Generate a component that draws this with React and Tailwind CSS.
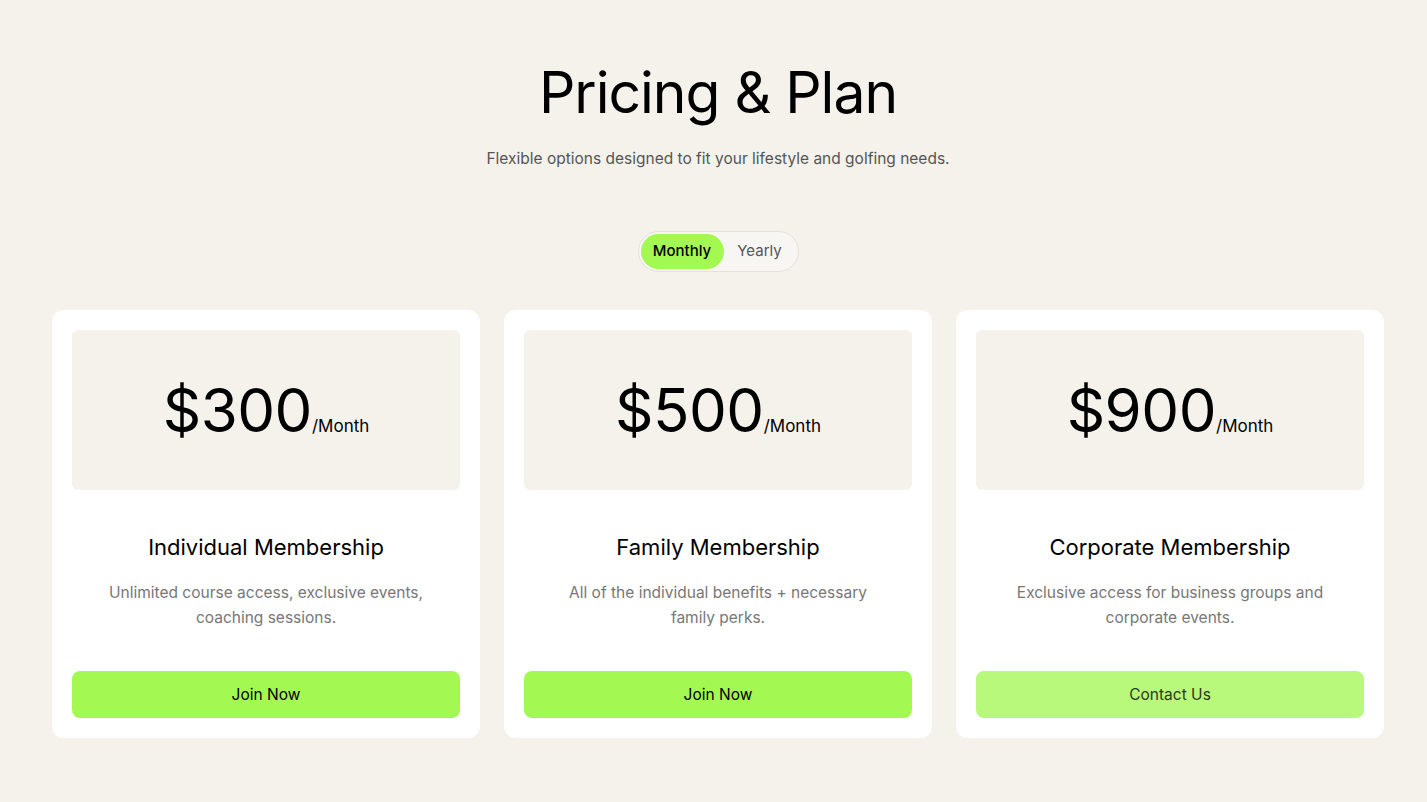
import React, { useState } from 'react'

const plans = [
  {
    price: '$300',
    name: 'Individual Membership',
    desc: 'Unlimited course access, exclusive events, coaching sessions.',
    cta: 'Join Now',
    muted: false,
  },
  {
    price: '$500',
    name: 'Family Membership',
    desc: 'All of the individual benefits + necessary family perks.',
    cta: 'Join Now',
    muted: false,
  },
  {
    price: '$900',
    name: 'Corporate Membership',
    desc: 'Exclusive access for business groups and corporate events.',
    cta: 'Contact Us',
    muted: true,
  },
]

function PlanCard({ plan }) {
  return (
    <div className="bg-white rounded-xl p-5 flex flex-col">
      <div className="h-[160px] rounded-md bg-[#f5f2ec] flex items-center justify-center">
        <span className="text-[60px] leading-none tracking-[-0.5px] text-black">{plan.price}</span>
        <span className="text-[17px] text-black self-center mt-[34px]">/Month</span>
      </div>
      <h3 className="mt-[42px] text-center text-[22px] leading-[30px] text-black">{plan.name}</h3>
      <p className="mt-[18px] mx-auto max-w-[340px] h-[50px] text-center text-[15.5px] leading-[25px] text-[#777]">
        {plan.desc}
      </p>
      <button
        className={
          'mt-[41px] h-[47px] rounded-lg text-[15.5px] ' +
          (plan.muted ? 'bg-[#b8f87b] text-[#2a3a20]' : 'bg-[#a3f852] text-black')
        }
      >
        {plan.cta}
      </button>
    </div>
  )
}

export default function App() {
  const [period, setPeriod] = useState('monthly')

  return (
    <div
      className="min-h-[802px] bg-[#f5f2ec] flex flex-col items-center pt-[62px]"
      style={{ fontFamily: 'Inter, "Liberation Sans", sans-serif' }}
    >
      <h1 className="ml-[9px] text-[57px] leading-[62px] tracking-[-1px] text-black">Pricing &amp; Plan</h1>
      <p className="ml-[9px] mt-[23px] text-[15.5px] leading-[24px] text-[#555]">
        Flexible options designed to fit your lifestyle and golfing needs.
      </p>

      <div className="ml-[9px] mt-[60px] flex items-center p-[2px] rounded-full border border-[#e4e1db] bg-[#f8f6f2]">
        <button
          onClick={() => setPeriod('monthly')}
          className={
            'h-[35px] w-[83px] rounded-full text-[15px] ' +
            (period === 'monthly' ? 'bg-[#a3f852] text-black font-medium' : 'text-[#555]')
          }
        >
          Monthly
        </button>
        <button
          onClick={() => setPeriod('yearly')}
          className={
            'h-[35px] w-[72px] rounded-full text-[15px] ' +
            (period === 'yearly' ? 'bg-[#a3f852] text-black font-medium' : 'text-[#555]')
          }
        >
          Yearly
        </button>
      </div>

      <div className="mt-[38px] self-start ml-[52px] grid grid-cols-[repeat(3,428px)] gap-6">
        {plans.map((p) => (
          <PlanCard key={p.name} plan={p} />
        ))}
      </div>
    </div>
  )
}
